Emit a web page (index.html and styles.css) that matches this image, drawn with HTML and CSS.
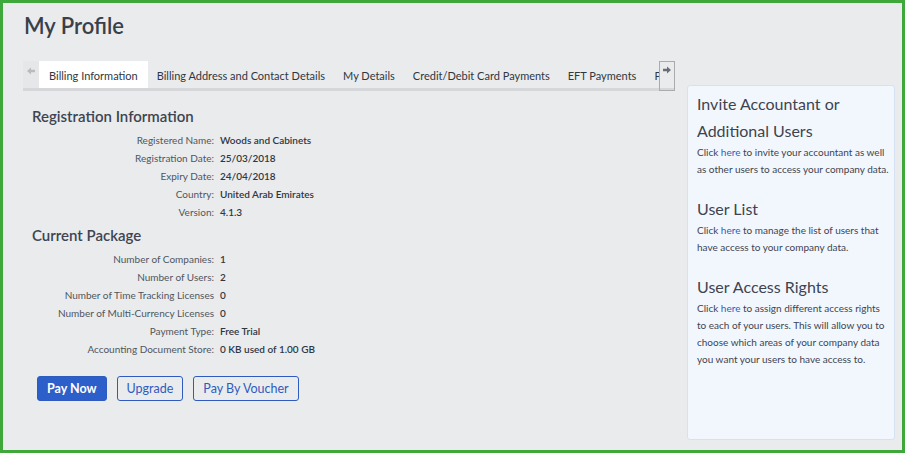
FILE: index.html
```html
<!DOCTYPE html>
<html lang="en">
<head>
    <meta charset="UTF-8">
    <meta name="viewport" content="width=device-width, initial-scale=1.0">
    <title>My Profile</title>
    <link rel="stylesheet" href="styles.css">
</head>
<body>
<div class="page">
    <h1>My Profile</h1>

    <div class="main">
        <div class="left">
            <div class="tabbar">
                <div class="scroll-btn left-btn">
                    <svg width="10" height="10" viewBox="0 0 10 10"><path d="M1 5 L5 1.5 L5 3.8 L9 3.8 L9 6.2 L5 6.2 L5 8.5 Z" fill="#b9bbbf"/></svg>
                </div>
                <div class="tabs">
                    <div class="tab active">Billing Information</div>
                    <div class="tab">Billing Address and Contact Details</div>
                    <div class="tab">My Details</div>
                    <div class="tab">Credit/Debit Card Payments</div>
                    <div class="tab">EFT Payments</div>
                    <div class="tab">Payment History</div>
                </div>
                <div class="scroll-btn right-btn">
                    <svg width="10" height="10" viewBox="0 0 10 10"><path d="M9 5 L5 1.5 L5 3.8 L1 3.8 L1 6.2 L5 6.2 L5 8.5 Z" fill="#6b6e73"/></svg>
                </div>
            </div>

            <div class="content">
                <h2>Registration Information</h2>
                <div class="rows">
                    <span class="lbl">Registered Name:</span><span class="val">Woods and Cabinets</span>
                    <span class="lbl">Registration Date:</span><span class="val">25/03/2018</span>
                    <span class="lbl">Expiry Date:</span><span class="val">24/04/2018</span>
                    <span class="lbl">Country:</span><span class="val">United Arab Emirates</span>
                    <span class="lbl">Version:</span><span class="val">4.1.3</span>
                </div>

                <h2>Current Package</h2>
                <div class="rows">
                    <span class="lbl">Number of Companies:</span><span class="val">1</span>
                    <span class="lbl">Number of Users:</span><span class="val">2</span>
                    <span class="lbl">Number of Time Tracking Licenses</span><span class="val">0</span>
                    <span class="lbl">Number of Multi-Currency Licenses</span><span class="val">0</span>
                    <span class="lbl">Payment Type:</span><span class="val">Free Trial</span>
                    <span class="lbl">Accounting Document Store:</span><span class="val">0 KB used of 1.00 GB</span>
                </div>

                <div class="buttons">
                    <button class="btn primary">Pay Now</button>
                    <button class="btn">Upgrade</button>
                    <button class="btn">Pay By Voucher</button>
                </div>
            </div>
        </div>

        <div class="side">
            <h3>Invite Accountant or Additional Users</h3>
            <p>Click <a href="#">here</a> to invite your accountant as well as other users to access your company data.</p>

            <h3>User List</h3>
            <p>Click <a href="#">here</a> to manage the list of users that have access to your company data.</p>

            <h3>User Access Rights</h3>
            <p>Click <a href="#">here</a> to assign different access rights to each of your users. This will allow you to choose which areas of your company data you want your users to have access to.</p>
        </div>
    </div>
</div>
</body>
</html>
```

FILE: styles.css
```css
body {
    margin: 0;
    font-family: 'Lato', 'Liberation Sans', sans-serif;
    background-color: #eaebed;
    color: #3d4450;
}

.page {
    box-sizing: border-box;
    width: 905px;
    height: 453px;
    border: 3px solid #3ea83a;
    padding: 0 7px 0 20px;
    overflow: hidden;
}

h1 {
    font-size: 22px;
    font-weight: 600;
    color: #38404b;
    margin: 8px 0 0 1px;
    line-height: 30px;
}

.main {
    display: flex;
    gap: 12px;
    margin-top: 20px;
}

.left {
    width: 652px;
    flex: none;
}

.tabbar {
    display: flex;
    height: 27px;
    border-bottom: 3px solid #d6d7da;
}

.scroll-btn {
    width: 16px;
    flex: none;
    display: flex;
    justify-content: center;
    padding-top: 5px;
    box-sizing: border-box;
}

.left-btn {
    background-color: #e6e7e9;
}

.right-btn {
    border: 1px solid #a9abae;
    margin-bottom: -3px;
    height: 30px;
    padding-top: 3px;
}

.tabs {
    display: flex;
    flex: 1;
    overflow: hidden;
    white-space: nowrap;
}

.tab {
    font-size: 11px;
    color: #2f3742;
    padding: 0 9px;
    line-height: 29px;
    flex: none;
}

.tab.active {
    background-color: #fff;
    padding: 0 10px;
    border-bottom: 3px solid #2c5fc9;
    height: 27px;
}

.content {
    padding: 0 0 0 9px;
}

h2 {
    font-size: 15px;
    font-weight: 600;
    color: #3d4450;
    margin: 15px 0 5px 0;
    line-height: 20px;
}

.rows {
    display: grid;
    grid-template-columns: 182px auto;
    column-gap: 6px;
    font-size: 10px;
    line-height: 18px;
}

.lbl {
    text-align: right;
    color: #4f5660;
}

.val {
    font-weight: 600;
    color: #2f3742;
}

.rows + h2 {
    margin-top: 4px;
}

.buttons {
    display: flex;
    gap: 10px;
    margin: 18px 0 0 5px;
}

.btn {
    font-family: 'Lato', 'Liberation Sans', sans-serif;
    font-size: 12.5px;
    color: #2f5bbf;
    background-color: transparent;
    border: 1px solid #2f5bbf;
    border-radius: 3px;
    height: 25px;
    padding: 0 9px;
}

.btn.primary {
    background-color: #2c5fc9;
    color: #fff;
    font-weight: 700;
}

.side {
    width: 208px;
    flex: none;
    box-sizing: border-box;
    height: 355px;
    margin-top: 24px;
    background-color: #f2f7fe;
    border: 1px solid #d4e2f4;
    border-radius: 3px;
    padding: 4px 5px 0 9px;
}

h3 {
    font-size: 16px;
    font-weight: 400;
    color: #3d4450;
    line-height: 27px;
    margin: 0;
}

p {
    font-size: 10px;
    line-height: 17px;
    margin: 0 0 17px 0;
    color: #3d4450;
}

a {
    color: #2f5bbf;
    text-decoration: none;
}
```
